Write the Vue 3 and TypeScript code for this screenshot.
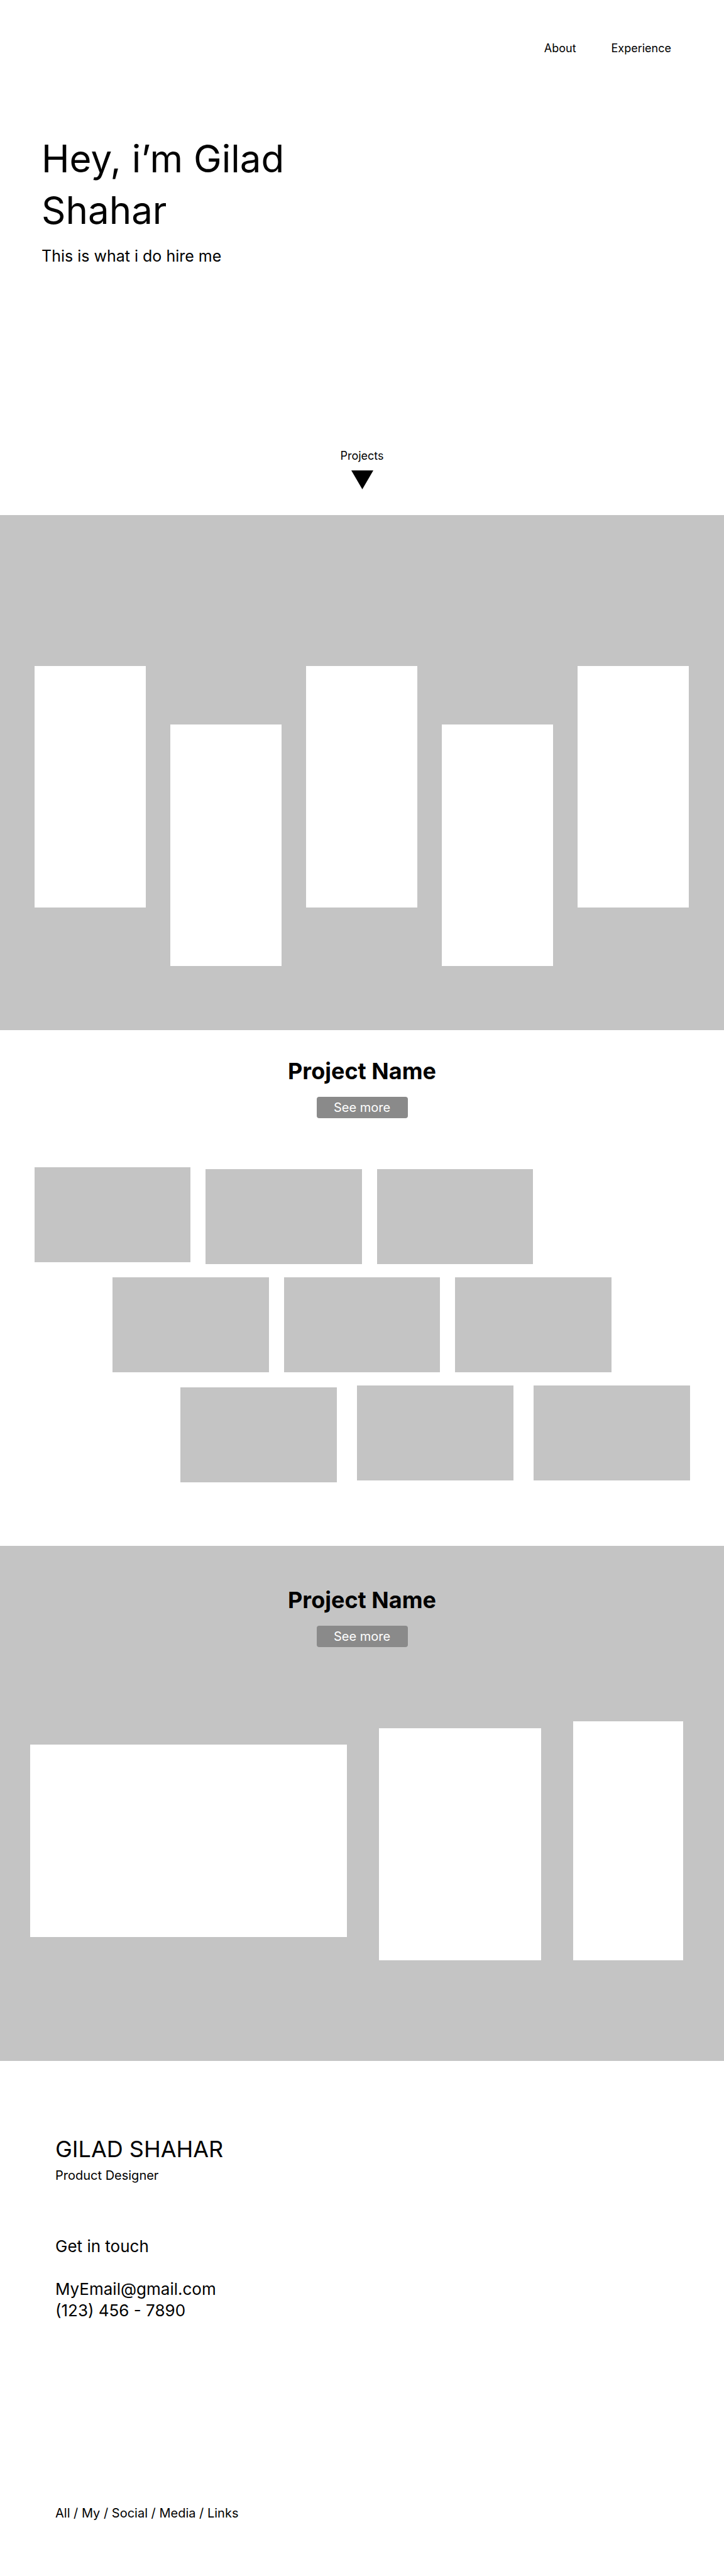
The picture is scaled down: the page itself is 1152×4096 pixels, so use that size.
<script setup lang="ts">
interface Link {
  label: string
  href: string
}

const navLinks: Link[] = [
  { label: 'About', href: '#about' },
  { label: 'Experience', href: '#experience' },
]

// Columns of the featured strip; lowered ones hang below their neighbours.
const featured: boolean[] = [false, true, false, true, false]

// Each collage row lists its tiles; true marks a tile set slightly lower.
const collage: { name: string; tiles: boolean[] }[] = [
  { name: 'start', tiles: [false, true, true] },
  { name: 'middle', tiles: [false, false, false] },
  { name: 'end', tiles: [true, false, false] },
]
</script>

<template>
  <div class="page">
    <header class="hero">
      <nav class="nav" aria-label="Main">
        <a v-for="link in navLinks" :key="link.label" :href="link.href">{{ link.label }}</a>
      </nav>
      <h1 class="hero-title">Hey, i’m Gilad Shahar</h1>
      <p class="hero-text">This is what i do hire me</p>
      <a class="scroll-link" href="#projects">
        <span>Projects</span>
        <svg class="arrow" viewBox="0 0 35 30" aria-hidden="true">
          <path d="M0 0H35L17.5 30Z" fill="#000" />
        </svg>
      </a>
    </header>

    <main>
      <section id="projects" class="featured">
        <div
          v-for="(lowered, i) in featured"
          :key="i"
          class="column"
          :class="{ 'column-lowered': lowered }"
        ></div>
      </section>

      <section class="project">
        <h2 class="project-title">Project Name</h2>
        <button class="more" type="button">See more</button>
        <div class="collage">
          <div v-for="row in collage" :key="row.name" class="row" :class="`row-${row.name}`">
            <div
              v-for="(dropped, i) in row.tiles"
              :key="i"
              class="tile"
              :class="{ 'tile-dropped': dropped }"
            ></div>
          </div>
        </div>
      </section>

      <section class="project project-shaded">
        <h2 class="project-title">Project Name</h2>
        <button class="more" type="button">See more</button>
        <div class="gallery">
          <div class="frame frame-desktop"></div>
          <div class="frame frame-tablet"></div>
          <div class="frame frame-phone"></div>
        </div>
      </section>
    </main>

    <footer class="footer">
      <p class="owner">GILAD SHAHAR</p>
      <p class="role">Product Designer</p>
      <div class="contact">
        <p class="contact-title">Get in touch</p>
        <a href="mailto:MyEmail@gmail.com">MyEmail@gmail.com</a>
        <a href="tel:1234567890">(123) 456 - 7890</a>
      </div>
      <p class="social">All / My / Social / Media / Links</p>
    </footer>
  </div>
</template>

<style>
body {
  margin: 0;
  background: #fff;
}
</style>

<style scoped>
.page {
  font-family: Inter, "Liberation Sans", sans-serif;
  font-size: 20px;
  line-height: 24px;
  color: #000;
}

h1,
h2,
p {
  margin: 0;
  font-weight: 400;
}

a {
  color: inherit;
  text-decoration: none;
}

.hero {
  display: flex;
  flex-direction: column;
  padding: 65px 66px 41px;
}

.nav {
  display: flex;
  justify-content: flex-end;
  gap: 56px;
  padding-right: 18px;
  font-size: 18px;
}

.hero-title {
  max-width: 480px;
  margin-top: 122px;
  font-size: 60px;
  line-height: 82px;
}

.hero-text {
  margin-top: 16px;
  font-size: 25px;
  line-height: 32px;
}

.scroll-link {
  display: flex;
  flex-direction: column;
  align-items: center;
  align-self: center;
  gap: 11px;
  margin-top: 290px;
  font-size: 18px;
}

.arrow {
  display: block;
  width: 35px;
  height: 30px;
}

.featured {
  display: flex;
  align-items: flex-start;
  gap: 39px;
  padding: 240px 56px 102px 55px;
  background: #c4c4c4;
}

.column {
  flex: 1;
  height: 384px;
  background: #fff;
}

.column-lowered {
  margin-top: 93px;
}

.project {
  display: flex;
  flex-direction: column;
  align-items: center;
  padding: 43px 0 101px;
}

.project-shaded {
  padding: 64px 0 160px;
  background: #c4c4c4;
}

.project-title {
  font-size: 36px;
  font-weight: 700;
  line-height: 44px;
}

.more {
  width: 145px;
  height: 34px;
  margin-top: 19px;
  padding: 0;
  border: 0;
  border-radius: 4px;
  background: #8a8a8a;
  color: #fff;
  font: inherit;
}

.collage {
  display: flex;
  flex-direction: column;
  align-self: stretch;
  gap: 21px;
  margin-top: 78px;
}

.row {
  display: flex;
  align-items: flex-start;
  gap: 24px;
}

.row-start {
  padding: 0 304px 0 55px;
}

.row-middle {
  padding: 0 179px;
}

.row-end {
  gap: 32px;
  padding: 0 54px 0 287px;
}

.tile {
  flex: 1;
  height: 151px;
  background: #c4c4c4;
}

.tile-dropped {
  margin-top: 3px;
}

.gallery {
  display: grid;
  grid-template-columns: 503fr 258fr 175fr;
  align-items: end;
  align-self: stretch;
  gap: 51px;
  margin-top: 118px;
  padding: 0 65px 0 48px;
}

.frame {
  background: #fff;
}

.frame-desktop {
  height: 306px;
  margin-bottom: 37px;
}

.frame-tablet {
  height: 369px;
}

.frame-phone {
  height: 380px;
}

.footer {
  padding: 118px 88px 88px;
}

.owner {
  font-size: 36px;
  line-height: 44px;
}

.role {
  margin-top: 8px;
}

.contact {
  display: flex;
  flex-direction: column;
  align-items: flex-start;
  margin-top: 84px;
  font-size: 26px;
  line-height: 34px;
}

.contact-title {
  margin-bottom: 34px;
}

.social {
  margin-top: 293px;
}
</style>
